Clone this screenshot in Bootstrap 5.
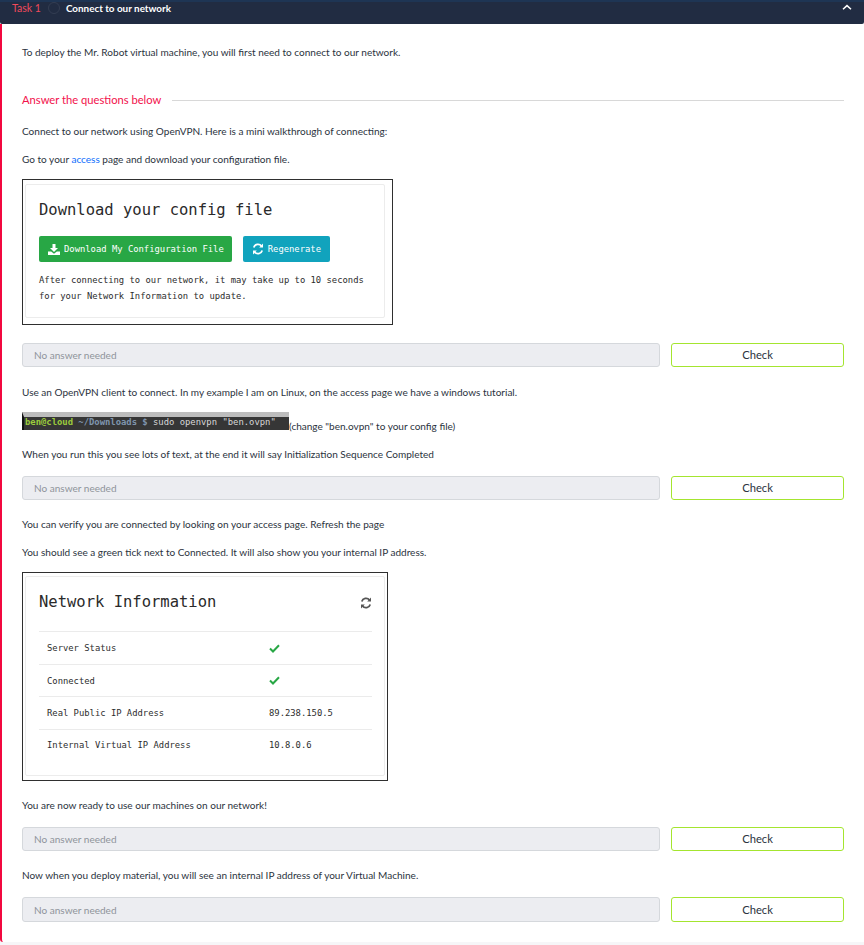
<!DOCTYPE html>
<html lang="en">
<head>
<meta charset="utf-8">
<title>Task 1</title>
<link href="https://cdn.jsdelivr.net/npm/bootstrap@5.3.0/dist/css/bootstrap.min.css" rel="stylesheet">
<style>
html,body{height:945px;overflow:hidden;background:#f6f6f8}
body{font-family:Lato,"Liberation Sans",sans-serif;font-size:10.04px;line-height:16px;color:#2b3340}
.task-head{height:24px;background:#212c42;border-top:2px solid #1e3554;color:#fff;padding:0 12px 11px 12px;border-radius:0 0 2px 2px}
.task-no{color:#f04a5c;font-size:10.5px}
.task-dot{width:12px;height:12px;border-radius:50%;border:1.5px solid #333d52;margin:0 6px 0 7px}
.task-title{font-weight:700;font-size:9.9px}
.task-body{height:918px;background:#fff;border-left:2px solid #f2083f;padding:0 20px;border-radius:0 0 0 3px}
.para{margin:0}
.intro{padding-top:20px;height:52px}
.ans-head{color:#f2114c;font-size:11.2px;margin-top:16px;height:16px}
.ans-rule{height:1px;background:#d8d8d8;margin-left:11px}
.gap-q{margin-top:15px}
.gap-s{margin-top:12px}
.gap-m{margin-top:16px}
.gap-f{margin-top:17px}
.shot{border:1px solid #2f2f2f;font-family:"DejaVu Sans Mono",monospace;color:#2d2d2d;background:#fff}
.shot-cfg{width:371px;height:146px;margin-top:12px;padding:4px 7px 6px 2px}
.shot-net{width:366px;height:209px;margin-top:12px;padding:3px 2px 4px 2px}
.shot .card{border-color:#ececec;height:100%;border-radius:2px;padding:15px 12px 14px 13px}
.shot-title{font-size:15.5px;line-height:20px;font-weight:400;margin:0;color:#2a2a2a}
.shot-btns{margin-top:16px;gap:11px}
.shot-btn{font-size:8.85px;line-height:12px;border-radius:2px;height:26px;padding:0 9px;border:0;color:#fff;gap:4px}
.btn-dl{background:#28a745;padding-right:8px}
.btn-re{background:#11a3bd}
.shot-note{font-size:8.85px;line-height:16px;margin:10px 0 0}
.ans-row{margin-top:14px;height:24px}
.ans-first{margin-top:18px}
.ans-row .form-control{height:100%;min-height:0;font-size:10.04px;line-height:16px;padding:0 11px;background:#ecedf1;border-color:#d5d8dc;border-radius:3px;width:638px;flex:none}
.ans-row .form-control::placeholder{color:#8f949b;opacity:1}
.ans-last{height:25px}
.btn-chk{width:173px;height:100%;padding:0;font-size:11.2px;line-height:20px;color:#2b3340;background:#fff;border:1px solid #a4e52f;border-radius:3px}
.term-line{height:22px;margin-top:12px}
.term{width:267px;height:18px;flex:none;background:#363636;border-left:2px solid #111;border-top:5px solid #bdbdbd;font-family:"DejaVu Sans Mono",monospace;font-size:8.87px;line-height:11px;padding-left:1px;color:#d8d8d8;white-space:pre}
.term-u{color:#9ccc3c;font-weight:700}
.term-p{color:#7f95ad;font-weight:700}
.cap-change{margin-top:6px}
.net-row{height:33px;border-top:1px solid #ebebeb;font-size:8.85px;padding-left:8px}
.net-label{width:222px}
.net-top{height:29px;margin-bottom:11px}
.net-sync{margin-top:5px}
</style>
</head>
<body>
<header class="task-head d-flex align-items-center">
  <span class="task-no">Task 1</span>
  <span class="task-dot"></span>
  <span class="task-title">Connect to our network</span>
  <svg class="ms-auto" width="10" height="7" viewBox="0 0 10 7"><path d="M1 5.200 5 1.600 9 5.200" fill="none" stroke="#fff" stroke-width="1.500"/></svg>
</header>
<main class="task-body">
  <p class="para intro">To deploy the Mr. Robot virtual machine, you will first need to connect to our network.</p>
  <div class="ans-head d-flex align-items-center">
    <span>Answer the questions below</span>
    <div class="ans-rule flex-grow-1"></div>
  </div>
  <p class="para gap-q">Connect to our network using OpenVPN. Here is a mini walkthrough of connecting:</p>
  <p class="para gap-s">Go to your <a href="#" class="text-decoration-none">access</a> page and download your configuration file.</p>
  <div class="shot shot-cfg">
    <div class="card">
      <h5 class="shot-title">Download your config file</h5>
      <div class="d-flex shot-btns">
        <button class="btn shot-btn btn-dl d-flex align-items-center">
          <svg width="12" height="11" viewBox="0 0 12 11"><path d="M4.500 0h3v4H10L6 8 2 4h2.500zM0 7.500h3.200L6 9.800l2.800-2.300H12V11H0z" fill="#fff"/></svg>
          Download My Configuration File</button>
        <button class="btn shot-btn btn-re d-flex align-items-center">
          <svg width="12" height="12" viewBox="0 0 12 12"><path d="M1.800 4.500A4.400 4.400 0 0 1 9.500 3M10.200 7.500A4.400 4.400 0 0 1 2.500 9" fill="none" stroke="#fff" stroke-width="1.800"/><path d="M11 .6V4.400H7.200zM1 11.400V7.600h3.800z" fill="#fff"/></svg>
          Regenerate</button>
      </div>
      <p class="shot-note">After connecting to our network, it may take up to 10 seconds<br>for your Network Information to update.</p>
    </div>
  </div>
  <div class="ans-row ans-first d-flex justify-content-between">
    <input class="form-control" type="text" placeholder="No answer needed" disabled>
    <button class="btn btn-chk">Check</button>
  </div>
  <p class="para gap-f">Use an OpenVPN client to connect. In my example I am on Linux, on the access page we have a windows tutorial.</p>
  <div class="term-line d-flex align-items-start">
    <div class="term"><span class="term-u">ben@cloud</span> <span class="term-p">~/Downloads $</span> sudo openvpn "ben.ovpn"</div>
    <span class="cap-change">(change "ben.ovpn" to your config file)</span>
  </div>
  <p class="para gap-s">When you run this you see lots of text, at the end it will say Initialization Sequence Completed</p>
  <div class="ans-row d-flex justify-content-between">
    <input class="form-control" type="text" placeholder="No answer needed" disabled>
    <button class="btn btn-chk">Check</button>
  </div>
  <p class="para gap-m">You can verify you are connected by looking on your access page. Refresh the page</p>
  <p class="para gap-s">You should see a green tick next to Connected. It will also show you your internal IP address.</p>
  <div class="shot shot-net">
    <div class="card">
      <div class="net-top d-flex justify-content-between align-items-start">
        <h5 class="shot-title">Network Information</h5>
        <svg class="net-sync" width="12" height="12" viewBox="0 0 12 12"><path d="M1.800 4.500A4.400 4.400 0 0 1 9.500 3M10.200 7.500A4.400 4.400 0 0 1 2.500 9" fill="none" stroke="#555" stroke-width="1.800"/><path d="M11 .6V4.400H7.200zM1 11.400V7.600h3.800z" fill="#555"/></svg>
      </div>
      <div class="net-row d-flex align-items-center"><span class="net-label">Server Status</span><svg width="11" height="9" viewBox="0 0 11 9"><path d="M1 4.500 4 7.500 10 1.300" fill="none" stroke="#28a745" stroke-width="2"/></svg></div>
      <div class="net-row d-flex align-items-center"><span class="net-label">Connected</span><svg width="11" height="9" viewBox="0 0 11 9"><path d="M1 4.500 4 7.500 10 1.300" fill="none" stroke="#28a745" stroke-width="2"/></svg></div>
      <div class="net-row d-flex align-items-center"><span class="net-label">Real Public IP Address</span><span>89.238.150.5</span></div>
      <div class="net-row d-flex align-items-center"><span class="net-label">Internal Virtual IP Address</span><span>10.8.0.6</span></div>
    </div>
  </div>
  <p class="para gap-m">You are now ready to use our machines on our network!</p>
  <div class="ans-row d-flex justify-content-between">
    <input class="form-control" type="text" placeholder="No answer needed" disabled>
    <button class="btn btn-chk">Check</button>
  </div>
  <p class="para gap-m">Now when you deploy material, you will see an internal IP address of your Virtual Machine.</p>
  <div class="ans-row ans-last d-flex justify-content-between">
    <input class="form-control" type="text" placeholder="No answer needed" disabled>
    <button class="btn btn-chk">Check</button>
  </div>
</main>
<script src="https://cdn.jsdelivr.net/npm/bootstrap@5.3.0/dist/js/bootstrap.bundle.min.js"></script>
</body>
</html>
